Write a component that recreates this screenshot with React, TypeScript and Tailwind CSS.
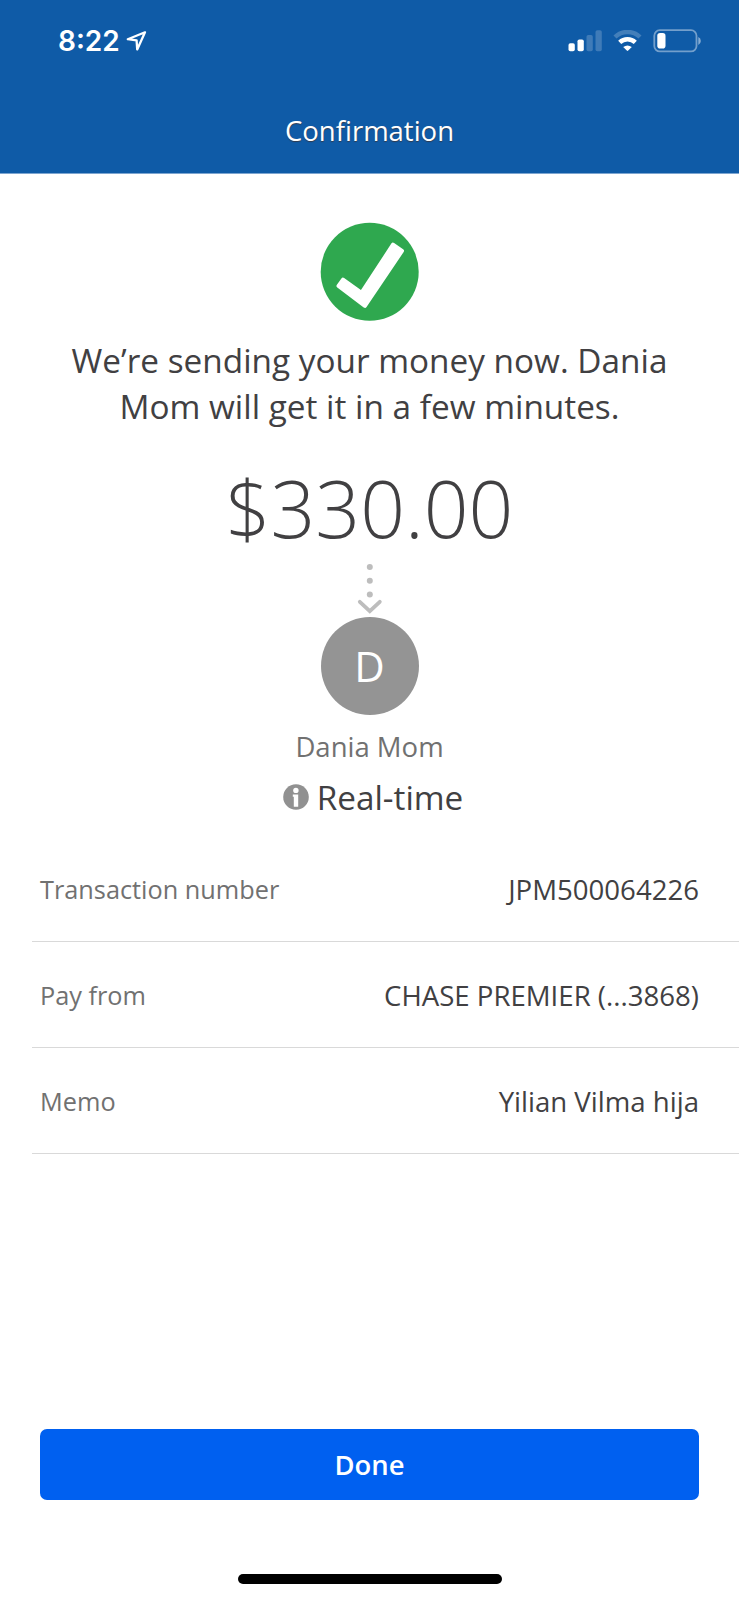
import React from "react";

const DETAILS = [
  { label: "Transaction number", value: "JPM500064226" },
  { label: "Pay from", value: "CHASE PREMIER (...3868)" },
  { label: "Memo", value: "Yilian Vilma hija" },
];

function StatusBar() {
  return (
    <div className="flex h-[82px] items-center pl-[58px] pr-[38px]">
      <span className="font-['Inter',sans-serif] text-[28px] leading-none font-semibold">8:22</span>
      <svg className="ml-[6px]" width="21" height="21" viewBox="0 0 21 21" fill="none">
        <path
          d="M19 1.3 L1.8 8.2 L10.6 9.4 L11.2 18.4 Z"
          stroke="currentColor"
          strokeWidth="2.3"
          strokeLinejoin="round"
        />
      </svg>

      <div className="ml-auto flex items-center">
        {/* Signal */}
        <svg width="34" height="22" viewBox="0 0 34 22" fill="currentColor">
          <rect x="0.5" y="13.3" width="6.3" height="8" rx="1.8" />
          <rect x="9.5" y="9.5" width="6.3" height="11.8" rx="1.8" />
          <rect x="18.5" y="5" width="6.3" height="16.3" rx="1.8" opacity="0.2" />
          <rect x="27.5" y="0.3" width="6.3" height="21" rx="1.8" opacity="0.2" />
        </svg>
        {/* Wifi */}
        <svg className="ml-[11px]" width="29" height="22" viewBox="0 0 29 22" fill="none">
          <path d="M2 7 A18 18 0 0 1 27 7" stroke="currentColor" strokeWidth="4.4" opacity="0.22" />
          <path d="M6.7 12.4 A11.3 11.3 0 0 1 22.3 12.4" stroke="currentColor" strokeWidth="4.4" />
          <path d="M10.2 17 Q14.5 13.8 18.8 17 L15.2 20.6 Q14.5 21.2 13.8 20.6 Z" fill="currentColor" />
        </svg>
        {/* Battery */}
        <svg className="ml-[11px]" width="48" height="24" viewBox="0 0 48 24" fill="currentColor">
          <rect x="1.3" y="1.2" width="42.2" height="21.2" rx="5.5" fill="none" stroke="currentColor" strokeWidth="1.8" opacity="0.42" />
          <path d="M45.3 8 Q47.8 9.2 47.8 12 Q47.8 14.8 45.3 16 Z" opacity="0.5" />
          <rect x="4.3" y="4" width="8.2" height="15.6" rx="2.8" />
        </svg>
      </div>
    </div>
  );
}

export default function App() {
  return (
    <div className="flex h-[1600px] w-[739px] flex-col bg-white font-['Open_Sans',sans-serif] text-[#414042]">
      <header className="h-[173px] bg-[#0f5ba7] text-white">
        <StatusBar />
        <h1 className="pt-[29px] text-center text-[27.5px] leading-[40px] [text-shadow:0_1px_1px_rgba(60,50,50,0.75)]">
          Confirmation
        </h1>
      </header>
      <div className="h-px bg-[#7da5d0]" />

      <main className="flex flex-col items-center pt-12">
        <svg width="99" height="99" viewBox="0 0 99 99">
          <circle cx="49.7" cy="49.8" r="49" fill="#2fa84f" />
          <path
            d="M18.5 63.9 L23 57.7 L41.5 70.9 L73 22.7 L82 28.9 L44.9 83.8 Z"
            fill="#fff"
            stroke="#fff"
            strokeWidth="4"
            strokeLinejoin="round"
          />
        </svg>

        <p className="mt-[17px] text-center text-[33.35px] leading-[45.5px]">
          We’re sending your money now. Dania
          <br />
          Mom will get it in a few minutes.
        </p>

        <p className="mt-[29px] text-[78.5px] leading-[100px] font-light">$330.00</p>

        <svg className="mt-[6px]" width="26" height="50" viewBox="0 0 26 50" fill="#bdbdbd">
          <circle cx="12.8" cy="3" r="3" />
          <circle cx="12.8" cy="16.8" r="3" />
          <circle cx="12.8" cy="30.6" r="3" />
          <path
            d="M2.8 37.8 L12.8 47.2 L22.8 37.8"
            fill="none"
            stroke="#bdbdbd"
            strokeWidth="3.8"
            strokeLinecap="round"
          />
        </svg>

        {/* Recipient */}
        <div className="mt-[3px] grid h-[98px] w-[98px] place-items-center rounded-full bg-[#949494] text-[42px] leading-none text-white">
          D
        </div>
        <p className="mt-[12px] text-[27.5px] leading-[40px] text-[#717171]">Dania Mom</p>
        <div className="mt-[6px] flex items-center gap-[8px] pl-[7px]">
          <svg width="26" height="26" viewBox="0 0 26 26">
            <circle cx="13" cy="13" r="12.8" fill="#919191" />
            <circle cx="12.9" cy="6.4" r="2.7" fill="#fff" />
            <path d="M9.8 10.5 H15.2 V22.8 H10.8 V12.8 H9.8 Z" fill="#fff" />
          </svg>
          <span className="text-[33.3px] leading-[48px]">Real-time</span>
        </div>
      </main>

      {/* Details */}
      <dl className="mt-[15px] pl-8">
        {DETAILS.map((d) => (
          <div
            key={d.label}
            className="flex h-[106px] items-center justify-between border-b border-[#d9d9d9] pt-[3px] pr-10 pl-2"
          >
            <dt className="text-[25.3px] text-[#717171]">{d.label}</dt>
            <dd className="text-[27.6px]">{d.value}</dd>
          </div>
        ))}
      </dl>

      <footer className="mt-auto flex flex-col items-center px-10 pb-4">
        <button className="h-[71px] w-full rounded-[7px] bg-[#0060f0] pt-px text-[27.4px] font-semibold text-white">
          Done
        </button>
        <div className="mt-[74px] h-[10px] w-[264px] rounded-full bg-black" />
      </footer>
    </div>
  );
}
